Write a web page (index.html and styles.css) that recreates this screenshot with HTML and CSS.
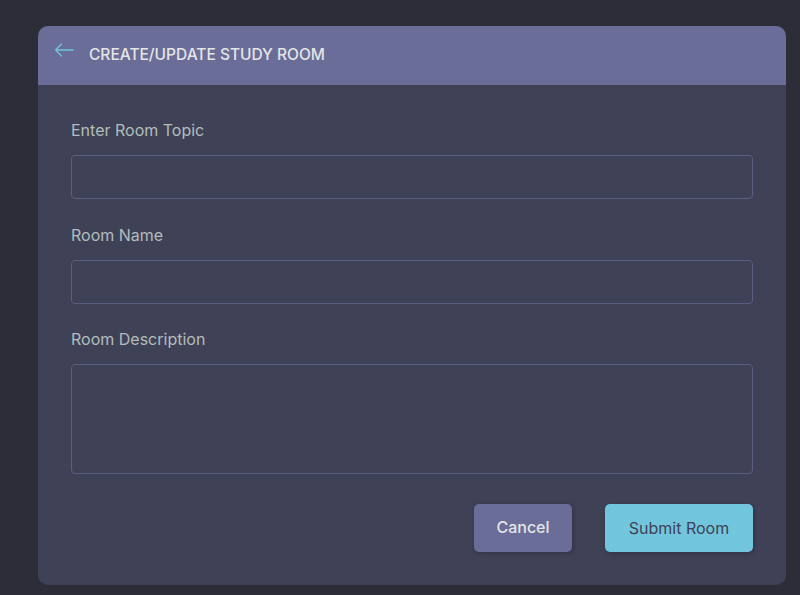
FILE: index.html
```html
<!DOCTYPE html>
<html>
<head>
<meta charset="utf-8">
<link rel="stylesheet" href="styles.css">
</head>
<body>
<div class="page">
  <div class="card">
    <div class="card-header">
      <a class="back" href="#">
        <svg width="20" height="14" viewBox="0 0 20 14" fill="none" stroke="#71c6dd" stroke-width="1.3" stroke-linecap="round" stroke-linejoin="round">
          <path d="M19 7H1.5M7.5 1L1.5 7L7.5 13"/>
        </svg>
      </a>
      <h3 class="title">CREATE/UPDATE STUDY ROOM</h3>
    </div>
    <form class="card-body">
      <div class="group">
        <label class="label">Enter Room Topic</label>
        <input class="field" type="text">
      </div>
      <div class="group">
        <label class="label">Room Name</label>
        <input class="field" type="text">
      </div>
      <div class="group group-last">
        <label class="label">Room Description</label>
        <textarea class="field area"></textarea>
      </div>
      <div class="actions">
        <button type="button" class="btn btn-cancel">Cancel</button>
        <button type="button" class="btn btn-submit">Submit Room</button>
      </div>
    </form>
  </div>
</div>
</body>
</html>
```
FILE: styles.css
```css
* { box-sizing: border-box; }
html, body { margin: 0; padding: 0; }
body {
  background: #2d2d39;
  font-family: Inter, "DejaVu Sans", sans-serif;
  height: 595px;
  overflow: hidden;
}
.page {
  padding: 26px 14px 0 38px;
}
.card {
  width: 748px;
  height: 559px;
  background: #3f4156;
  border-radius: 10px;
  overflow: hidden;
}
.card-header {
  height: 59px;
  background: #696d97;
  display: flex;
  align-items: center;
  padding: 0 0 0 16px;
}
.back {
  display: flex;
  width: 20px;
  height: 14px;
  margin-top: -12px;
}
.title {
  margin: 0 0 2px 15px;
  font-size: 15.5px;
  font-weight: 500;
  color: #e5e5e5;
  letter-spacing: 0;
}
.card-body {
  padding: 35px 33px 0 33px;
  display: flex;
  flex-direction: column;
}
.group {
  display: flex;
  flex-direction: column;
  gap: 15px;
  margin-bottom: 25.5px;
}
.group-last { margin-bottom: 30px; }
.label {
  font-size: 16px;
  line-height: 20px;
  color: #b2bdbd;
}
.field {
  height: 44px;
  background: transparent;
  border: 1px solid #5b5d85;
  border-radius: 4px;
  color: #e5e5e5;
  outline: none;
  font-family: inherit;
}
.area {
  height: 110px;
  resize: none;
}
.actions {
  display: flex;
  justify-content: flex-end;
  gap: 33px;
}
.btn {
  height: 48px;
  border: none;
  border-radius: 5px;
  font-family: inherit;
  font-size: 16px;
  box-shadow: 1px 1px 4px rgba(0,0,0,0.25);
}
.btn-cancel {
  width: 98px;
  background: #696d97;
  color: #e5e5e5;
  font-weight: 500;
  padding-bottom: 3px;
}
.btn-submit {
  width: 148px;
  background: #71c6dd;
  color: #3f4156;
}
```
